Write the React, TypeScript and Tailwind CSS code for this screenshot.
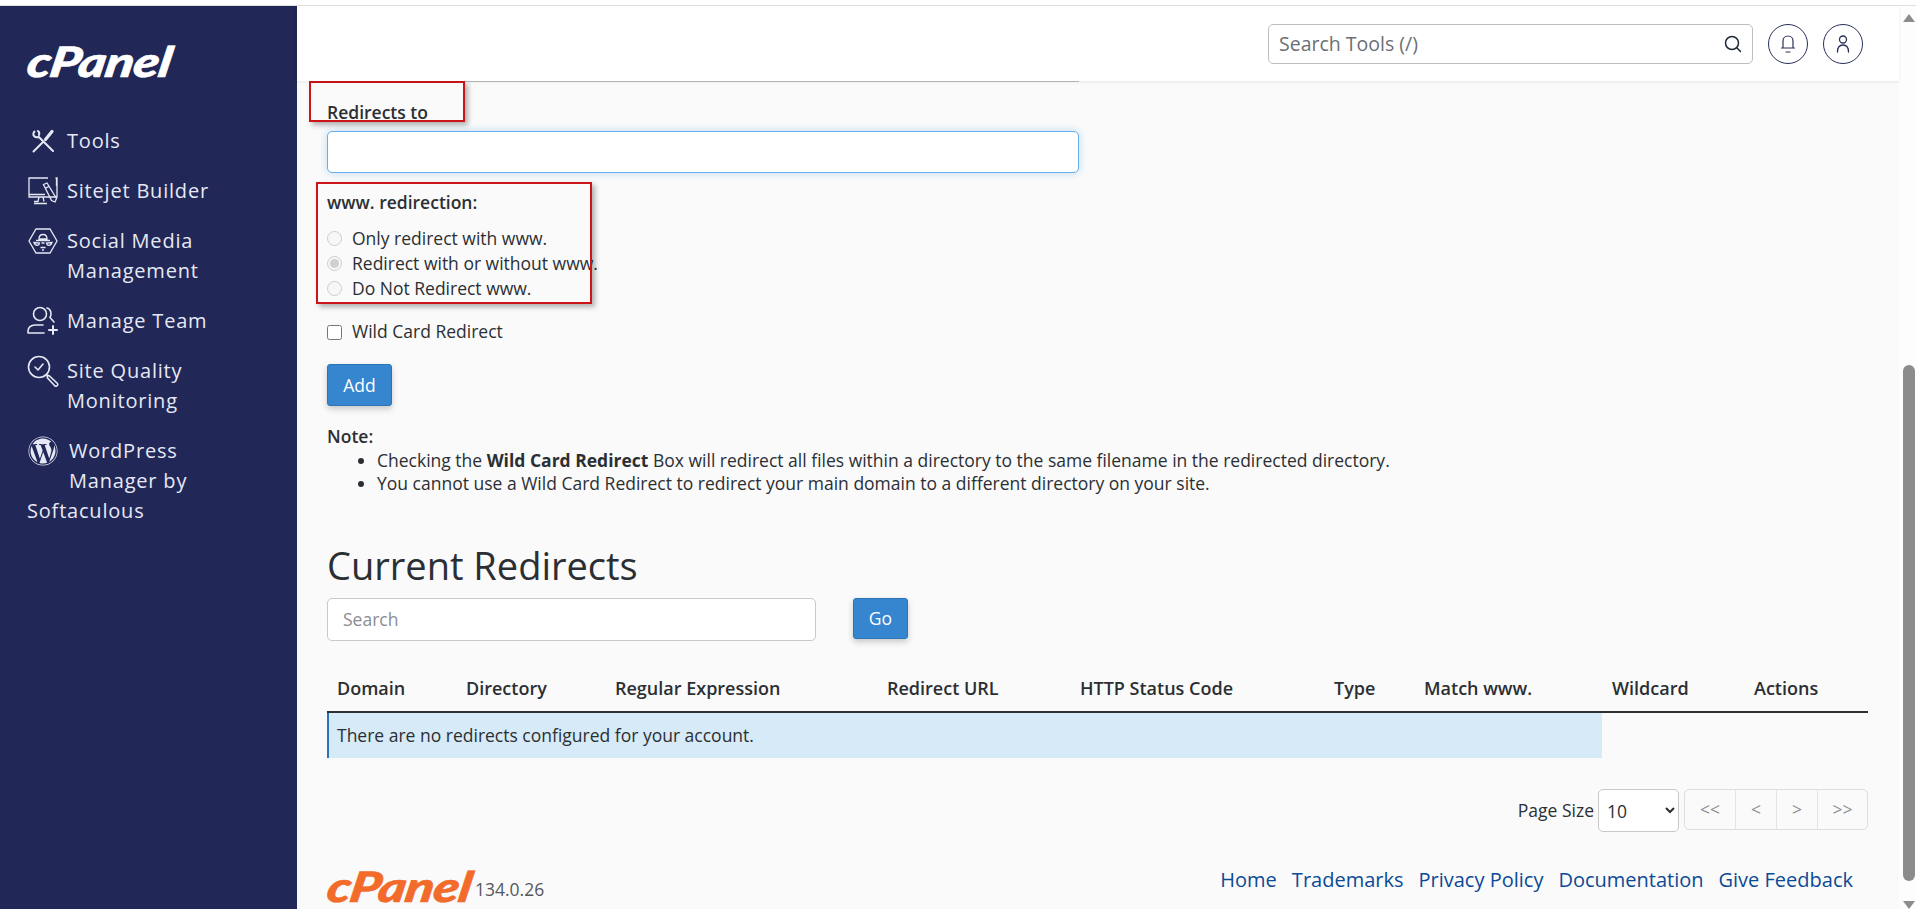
import { FaWordpress } from "react-icons/fa"

const navIconClass = "shrink-0 text-[#e6e9f5]"

function ToolsIcon() {
  return (
    <svg width="24" height="24" viewBox="0 0 24 24" fill="none" stroke="currentColor" strokeWidth="2" strokeLinecap="round" className={navIconClass}>
      <path d="M3.500 2.500c-1.500 1.500-1.500 3.500-.2 4.800 1.200 1.100 2.900 1.200 4.300.5L22 22" />
      <path d="M7 2c1.200 1 1.600 2.400 1 4" />
      <path d="M2.500 22.500l9.500-9.500" />
      <path d="M14.500 10.500l6.500-8" strokeWidth="3.200" />
    </svg>
  )
}

function SitejetIcon() {
  return (
    <svg width="30" height="30" viewBox="0 0 30 30" fill="none" stroke="currentColor" strokeWidth="1.300" className={navIconClass}>
      <path d="M20 2H1v19h28V2h-1.500M28.500 2v8" />
      <path d="M1 18.500h16M11 21l-1 4.500h-4M15 21l1 4.500M6 27.500h13" />
      <path d="M15.500 8.500l3.500-1.500 9.500 15.500-1.500 3.500-3.500-1.500zM18 12l3.500-2" />
    </svg>
  )
}

function SocialIcon() {
  return (
    <svg width="30" height="28" viewBox="0 0 30 28" fill="none" stroke="currentColor" strokeWidth="1.300" className={navIconClass}>
      <path d="M8 2h14l7 12-7 12H8L1 14z" />
      <path d="M11 12c0-6 8-6 8 0zM8 13.500h14" />
      <path d="M6 15.500l5.500.5c-.5 3-4 3.500-5.500-.5zM24 15.500l-5.500.5c.5 3 4 3.500 5.500-.5zM13.500 16h3M12.500 20.500h5M14 23h2" />
    </svg>
  )
}

function TeamIcon() {
  return (
    <svg width="32" height="32" viewBox="0 0 32 32" fill="none" stroke="currentColor" strokeWidth="1.600" strokeLinecap="round" className={navIconClass}>
      <circle cx="13" cy="9" r="6.500" />
      <path d="M1 28v-2c0-3.500 3-6 7-6h8M1 28h16" />
      <path d="M20 3c4 1 5 6 3 9.500l4 4.500" />
      <path d="M26 21v8M22 25h8" strokeWidth="2" />
    </svg>
  )
}

function QualityIcon() {
  return (
    <svg width="32" height="32" viewBox="0 0 32 32" fill="none" stroke="currentColor" strokeWidth="1.600" strokeLinecap="round" strokeLinejoin="round" className={navIconClass}>
      <circle cx="12" cy="12" r="10.500" />
      <path d="M8 12l3 3 5-6" />
      <path d="M20 20l2.500 1 8 7.500c.8 1.800-1 3.300-2.500 2.500l-7.500-8z" />
    </svg>
  )
}

function BellIcon() {
  return (
    <svg width="16" height="20" viewBox="0 0 16 20" fill="none" stroke="#2a2f5c" strokeWidth="1.200" strokeLinecap="round">
      <path d="M3 14V7c0-3 2.200-5 5-5s5 2 5 5v7M1.500 14h13M6 18h4" />
    </svg>
  )
}

function UserIcon() {
  return (
    <svg width="16" height="20" viewBox="0 0 16 20" fill="none" stroke="#2a2f5c" strokeWidth="1.300" strokeLinecap="round">
      <circle cx="8" cy="5.500" r="3.500" />
      <path d="M2.500 18c0-4 2-7 5.500-7s5.500 3 5.500 7" />
    </svg>
  )
}

function SearchIcon() {
  return (
    <svg width="18" height="18" viewBox="0 0 18 18" fill="none" stroke="#1f2937" strokeWidth="1.500" strokeLinecap="round">
      <circle cx="8" cy="8" r="6.500" />
      <path d="M12.800 12.800L16.500 16.500" />
    </svg>
  )
}

function Logo({ footer }: { footer?: boolean }) {
  return (
    <span
      className={
        footer
          ? "ml-px block w-[147px] origin-left scale-x-[1.25] -skew-x-[8deg] font-['Lato',sans-serif] text-[42px] leading-[31px] font-black italic tracking-[-0.5px] text-[#f26b2b] [-webkit-text-stroke:0.6px_currentColor]"
          : "ml-px block w-[147px] origin-left scale-x-[1.25] -skew-x-[8deg] font-['Lato',sans-serif] text-[42px] leading-[31px] font-black italic tracking-[-0.5px] text-white [-webkit-text-stroke:0.6px_currentColor]"
      }
    >
      cPanel
    </span>
  )
}

function NavItem({ icon, lines }: { icon: React.ReactNode; lines: string[] }) {
  return (
    <a className="flex h-[50px] items-start gap-[9px]">
      <span className="flex h-[30px] w-[31px] shrink-0 items-center justify-center">{icon}</span>
      <span className="leading-[30px]">
        {lines.map((line) => (
          <span key={line} className="block">
            {line}
          </span>
        ))}
      </span>
    </a>
  )
}

function Sidebar() {
  return (
    <aside className="w-[297px] shrink-0 bg-[#212756] pl-[27px] pt-[40px] text-[20px] tracking-[0.8px] text-[#e6e9f5]">
      <Logo />
      <nav className="mt-[49px] flex flex-col">
        <NavItem icon={<ToolsIcon />} lines={["Tools"]} />
        <NavItem icon={<SitejetIcon />} lines={["Sitejet Builder"]} />
        <div className="h-[80px]">
          <NavItem icon={<SocialIcon />} lines={["Social Media", "Management"]} />
        </div>
        <NavItem icon={<TeamIcon />} lines={["Manage Team"]} />
        <div className="h-[80px]">
          <NavItem icon={<QualityIcon />} lines={["Site Quality", "Monitoring"]} />
        </div>
        <div className="leading-[30px]">
          <span className="flex">
            <FaWordpress className="mr-[11px] ml-px shrink-0 text-[30px]" />
            <span>
              WordPress
              <br />
              Manager by
            </span>
          </span>
          Softaculous
        </div>
      </nav>
    </aside>
  )
}

function Topbar() {
  return (
    <header className="relative z-10 flex h-[75px] shrink-0 items-start justify-end gap-[15px] bg-white pr-[36px] pt-[18px] shadow-[0_1px_3px_rgba(0,0,0,0.08)]">
      <div className="flex h-[40px] w-[485px] items-center justify-between rounded-[5px] border border-[#bdbdbd] pl-[10px] pr-[10px] text-[19.500px] text-[#6b6f75]">
        <span>Search Tools (/)</span>
        <SearchIcon />
      </div>
      <button className="flex h-[40px] w-[40px] items-center justify-center rounded-full border border-[#2a2f5c]">
        <BellIcon />
      </button>
      <button className="flex h-[40px] w-[40px] items-center justify-center rounded-full border border-[#2a2f5c]">
        <UserIcon />
      </button>
    </header>
  )
}

const columns = ["Domain", "Directory", "Regular Expression", "Redirect URL", "HTTP Status Code", "Type", "Match www.", "Wildcard", "Actions"]

function RedirectForm() {
  return (
    <>
      <div className="h-px w-[752px] bg-[#bcbcbc]" />
      <label className="mt-[18px] block leading-[24px] font-semibold">Redirects to</label>
      <input className="mt-[7px] block h-[42px] w-[752px] rounded-[5px] border border-[#66afe9] bg-white shadow-[0_0_8px_rgba(102,175,233,0.4)]" readOnly />
      <div className="mt-[17px] leading-[24px] font-semibold">www. redirection:</div>
      <div className="mt-[12px]">
        <label className="flex h-[25px] items-center gap-[10px]">
          <input type="radio" name="www" disabled className="m-0 h-[15px] w-[15px]" />
          Only redirect with www.
        </label>
        <label className="flex h-[25px] items-center gap-[10px]">
          <input type="radio" name="www" disabled defaultChecked className="m-0 h-[15px] w-[15px]" />
          Redirect with or without www.
        </label>
        <label className="flex h-[25px] items-center gap-[10px]">
          <input type="radio" name="www" disabled className="m-0 h-[15px] w-[15px]" />
          Do Not Redirect www.
        </label>
      </div>
      <label className="mt-[18px] flex h-[24px] items-center gap-[10px]">
        <input type="checkbox" className="m-0 mt-[2px] h-[15px] w-[15px]" />
        Wild Card Redirect
      </label>
      <button className="mt-[21px] block h-[42px] w-[65px] rounded-[3px] border border-[#2b74b5] bg-[#3585cf] text-white shadow-[0_3px_6px_rgba(0,0,0,0.2)]">
        Add
      </button>
      <div className="mt-[18px] leading-[24px] font-semibold">Note:</div>
      <ul className="list-disc pl-[50px] pt-px leading-[23px]">
        <li>
          Checking the <strong className="font-bold">Wild Card Redirect</strong> Box will redirect all files within a directory to the same filename in the redirected directory.
        </li>
        <li>You cannot use a Wild Card Redirect to redirect your main domain to a different directory on your site.</li>
      </ul>
    </>
  )
}

function RedirectTable() {
  return (
    <>
      <h2 className="mt-[50px] text-[38px] leading-[40px] font-normal text-[#2b2f33]">Current Redirects</h2>
      <div className="mt-[13px] flex items-start gap-[37px]">
        <div className="flex h-[43px] w-[489px] items-center rounded-[5px] border border-[#c9c9c9] bg-white pl-[15px] text-[#8a8d91]">Search</div>
        <button className="h-[41px] w-[55px] rounded-[3px] border border-[#2b74b5] bg-[#3585cf] text-white shadow-[0_3px_6px_rgba(0,0,0,0.2)]">Go</button>
      </div>
      <div className="mt-[28px] grid h-[44px] grid-cols-[129px_149px_272px_193px_254px_90px_188px_142px_1fr] items-center border-b-2 border-[#2b2f33] pl-[10px] pb-[4px] text-[18px] font-semibold">
        {columns.map((col) => (
          <span key={col}>{col}</span>
        ))}
      </div>
      <div className="flex h-[45px] w-[1275px] items-center border-l-2 border-[#2b74b5] bg-[#d6eaf8] pl-[8px]">There are no redirects configured for your account.</div>
      <div className="mt-[31px] flex items-start justify-end">
        <span className="mr-[4px] self-center pb-[1px]">Page Size</span>
        <select className="h-[43px] w-[81px] rounded-[5px] border border-[#c9c9c9] bg-white pl-[4px]" defaultValue="10">
          <option>10</option>
        </select>
        <div className="ml-[5px] flex h-[41px] w-[184px] rounded-[5px] border border-[#dedede] text-[#8a8d91]">
          <span className="flex w-[50px] items-center justify-center">&lt;&lt;</span>
          <span className="flex w-[41px] items-center justify-center border-l border-[#e4e4e4]">&lt;</span>
          <span className="flex w-[41px] items-center justify-center border-l border-[#e4e4e4]">&gt;</span>
          <span className="flex flex-1 items-center justify-center border-l border-[#e4e4e4]">&gt;&gt;</span>
        </div>
      </div>
    </>
  )
}

function Footer() {
  return (
    <footer className="mt-[39px] flex items-start justify-between pr-[15px]">
      <div className="flex items-end">
        <Logo footer />
        <span className="text-[#54585c]">134.0.26</span>
      </div>
      <div className="-mt-[3px] flex gap-[15px] text-[20px] leading-[24px] text-[#0b4a96]">
        <a>Home</a>
        <a>Trademarks</a>
        <a>Privacy Policy</a>
        <a>Documentation</a>
        <a>Give Feedback</a>
      </div>
    </footer>
  )
}

function Scrollbar() {
  return (
    <div className="flex w-[17px] shrink-0 flex-col items-center bg-[#fdfdfd] pl-[3px] pt-[8px]">
      <div className="h-0 w-0 border-x-[6px] border-b-[8px] border-x-transparent border-b-[#8c8c8c]" />
      <div className="mt-[343px] h-[518px] w-[12px] rounded-full bg-[#8c8c8c]" />
      <div className="mt-[20px] h-0 w-0 border-x-[6px] border-t-[8px] border-x-transparent border-t-[#8c8c8c]" />
    </div>
  )
}

export default function App() {
  return (
    <div className="flex h-screen flex-col overflow-hidden bg-white font-['Open_Sans',sans-serif] text-[17.500px] text-[#2b2f33]">
      <div className="h-[6px] shrink-0 border-b border-[#e0e0e0]" />
      <div className="flex min-h-0 flex-1">
        <Sidebar />
        <div className="flex min-w-0 flex-1 flex-col bg-[#fafafa]">
          <Topbar />
          <main className="relative pl-[30px] pr-[31px]">
            <RedirectForm />
            <RedirectTable />
            <Footer />
            <div className="absolute left-[12px] top-0 h-[41px] w-[156px] border-2 border-[#cc1419] shadow-[3px_3px_5px_rgba(0,0,0,0.3)]" />
            <div className="absolute left-[19px] top-[101px] h-[122px] w-[276px] border-2 border-[#cc1419] shadow-[3px_3px_5px_rgba(0,0,0,0.3)]" />
          </main>
        </div>
        <Scrollbar />
      </div>
    </div>
  )
}
